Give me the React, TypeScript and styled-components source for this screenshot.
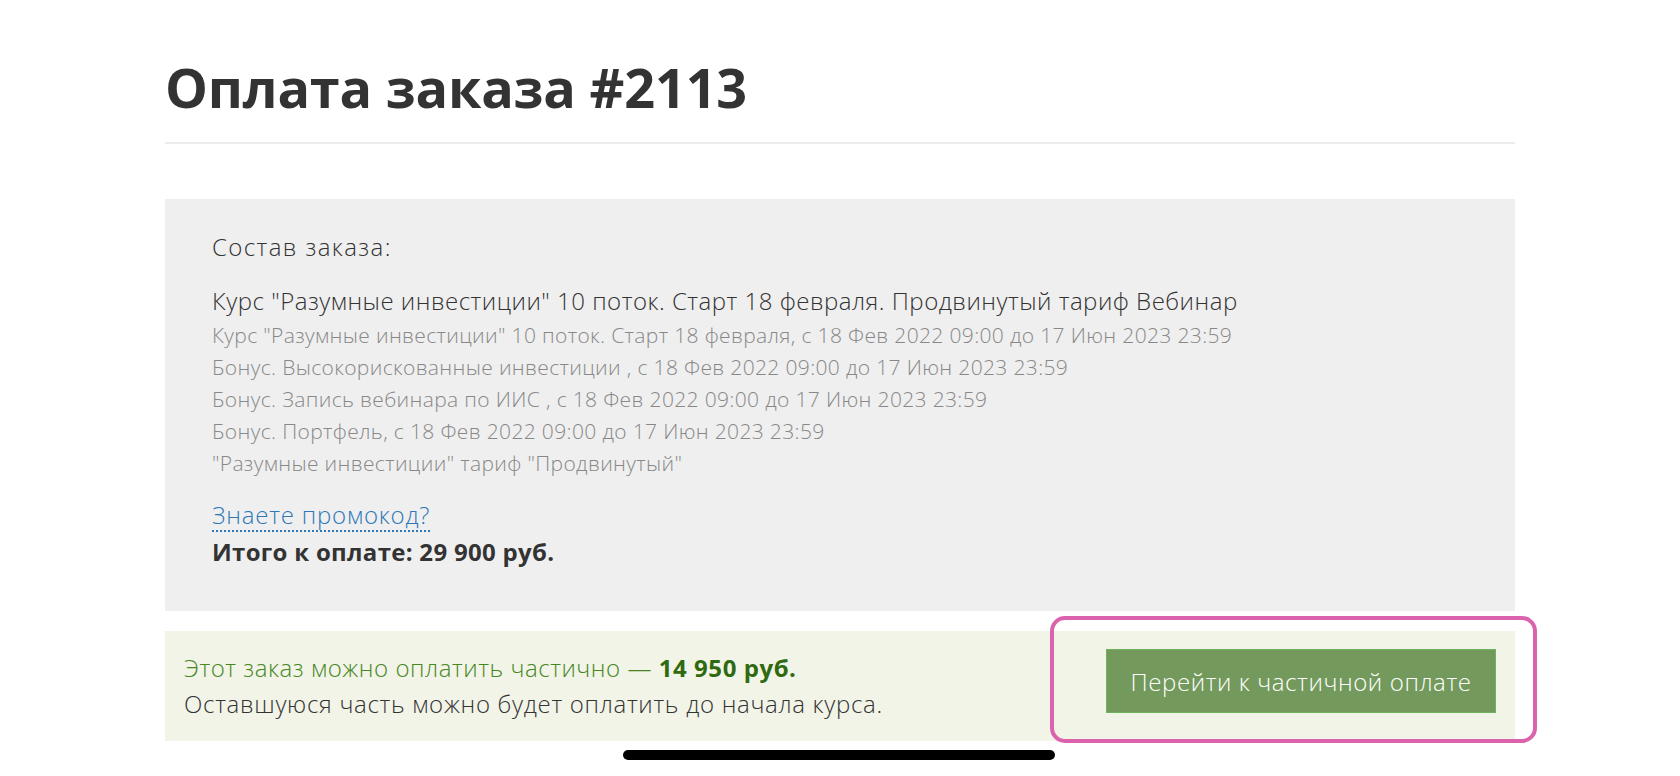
import React from 'react';
import styled, { createGlobalStyle } from 'styled-components';

const GlobalStyle = createGlobalStyle`
  html, body {
    margin: 0;
    padding: 0;
    background: #ffffff;
  }
  body {
    font-family: "Open Sans", "Liberation Sans", sans-serif;
    color: #333333;
  }
`;

const Page = styled.div`
  position: relative;
  width: 1680px;
  height: 776px;
  overflow: hidden;
`;

const Container = styled.div`
  width: 1350px;
  margin-left: 165px;
  padding-top: 52px;
`;

const Title = styled.h1`
  margin: 0;
  padding-bottom: 20px;
  font-size: 54px;
  line-height: 70px;
  font-weight: 700;
  color: #333333;
  letter-spacing: -0.2px;
  border-bottom: 2px solid #ececec;
`;

const OrderBox = styled.section`
  margin-top: 55px;
  background: #efefef;
  padding: 33px 47px 44px;
`;

const Caption = styled.div`
  font-size: 24px;
  font-weight: 300;
  line-height: 30px;
  letter-spacing: 1.4px;
  margin-bottom: 24px;
`;

const ItemTitle = styled.div`
  font-size: 24px;
  font-weight: 300;
  line-height: 30px;
  letter-spacing: 0.5px;
  margin-bottom: 3px;
`;

const SubItem = styled.div`
  font-size: 21px;
  font-weight: 300;
  line-height: 32px;
  letter-spacing: 0.35px;
  color: #888888;
`;

const PromoLink = styled.a`
  display: inline-block;
  margin-top: 21px;
  font-size: 24px;
  font-weight: 300;
  line-height: 30px;
  letter-spacing: 0.8px;
  color: #2f78b7;
  text-decoration: none;
  border-bottom: 2px dotted #2f78b7;
`;

const Total = styled.div`
  font-size: 24px;
  font-weight: 700;
  line-height: 30px;
  letter-spacing: 0.3px;
  margin-top: 5px;
`;

const PartialBox = styled.section`
  position: relative;
  margin-top: 20px;
  height: 110px;
  background: #f2f4e8;
  display: flex;
  align-items: center;
  justify-content: space-between;
  padding: 0 19px;
`;

const PartialText = styled.div`
  font-size: 24px;
  font-weight: 300;
  line-height: 36px;
`;

const GreenLine = styled.div`
  color: #47871f;
  letter-spacing: 0.55px;
  strong {
    color: #2f6a10;
    font-weight: 700;
  }
`;

const GreyLine = styled.div`
  color: #333333;
  letter-spacing: 0.7px;
`;

const PayButton = styled.button`
  width: 390px;
  height: 64px;
  margin-top: -10px;
  background: #739a5c;
  border: 1px solid #6fb35c;
  color: #ffffff;
  font-family: inherit;
  font-size: 24px;
  font-weight: 300;
  letter-spacing: 0.6px;
  cursor: pointer;
`;

const Highlight = styled.div`
  position: absolute;
  left: 885px;
  top: -15px;
  right: -22px;
  bottom: -2px;
  border: 4px solid #db62ac;
  border-radius: 15px;
  pointer-events: none;
`;

const HomeIndicator = styled.div`
  position: absolute;
  left: 623px;
  top: 750px;
  width: 432px;
  height: 10px;
  border-radius: 5px;
  background: #000000;
`;

const subItems = [
  'Курс "Разумные инвестиции" 10 поток. Старт 18 февраля, с 18 Фев 2022 09:00 до 17 Июн 2023 23:59',
  'Бонус. Высокорискованные инвестиции , с 18 Фев 2022 09:00 до 17 Июн 2023 23:59',
  'Бонус. Запись вебинара по ИИС , с 18 Фев 2022 09:00 до 17 Июн 2023 23:59',
  'Бонус. Портфель, с 18 Фев 2022 09:00 до 17 Июн 2023 23:59',
  '"Разумные инвестиции" тариф "Продвинутый"',
];

export default function App() {
  return (
    <Page>
      <GlobalStyle />
      <Container>
        <Title>Оплата заказа #2113</Title>
        <OrderBox>
          <Caption>Состав заказа:</Caption>
          <ItemTitle>Курс "Разумные инвестиции" 10 поток. Старт 18 февраля. Продвинутый тариф Вебинар</ItemTitle>
          {subItems.map((item) => (
            <SubItem key={item}>{item}</SubItem>
          ))}
          <PromoLink href="#">Знаете промокод?</PromoLink>
          <Total>Итого к оплате: 29 900 руб.</Total>
        </OrderBox>
        <PartialBox>
          <PartialText>
            <GreenLine>
              Этот заказ можно оплатить частично — <strong>14 950 руб.</strong>
            </GreenLine>
            <GreyLine>Оставшуюся часть можно будет оплатить до начала курса.</GreyLine>
          </PartialText>
          <PayButton>Перейти к частичной оплате</PayButton>
          <Highlight />
        </PartialBox>
      </Container>
      <HomeIndicator />
    </Page>
  );
}
